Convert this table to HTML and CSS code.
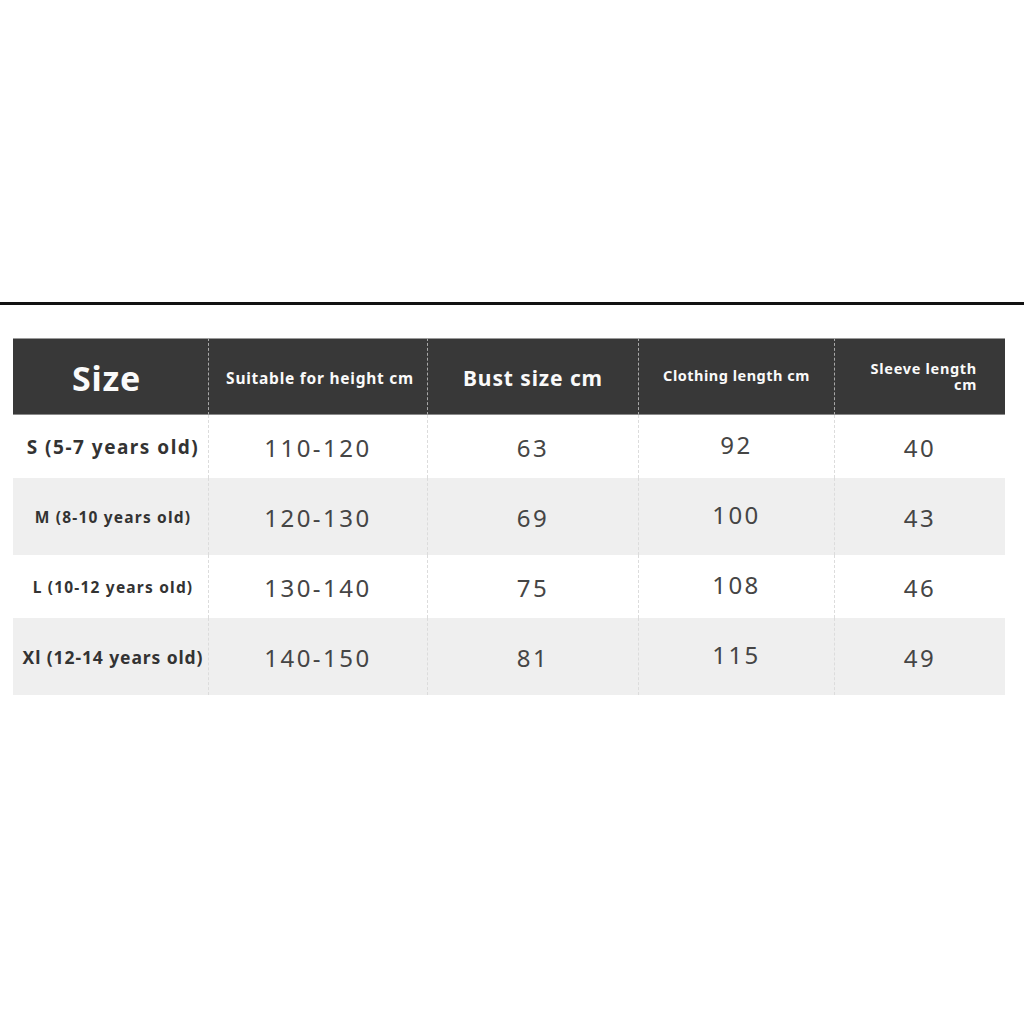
FILE: index.html
```html
<!DOCTYPE html>
<html>
<head>
<meta charset="utf-8">
<link rel="stylesheet" href="styles.css">
</head>
<body>
<div class="rule"></div>
<div class="chart">
  <div class="hd c1"><span class="h-size">Size</span></div>
  <div class="hd sep"><span class="h-height">Suitable for height cm</span></div>
  <div class="hd sep"><span class="h-bust">Bust size cm</span></div>
  <div class="hd sep"><span class="h-cloth">Clothing length cm</span></div>
  <div class="hd sep sleeve"><div class="h-sleeve"><span class="sl-line">Sleeve length</span><span class="sl-line">cm</span></div></div>

  <div class="cell c1 r-a"><span class="sz sz-lg">S (5-7 years old)</span></div>
  <div class="cell sep r-a num">110-120</div>
  <div class="cell sep r-a num">63</div>
  <div class="cell sep r-a num up">92</div>
  <div class="cell sep r-a num">40</div>

  <div class="cell c1 r-b alt"><span class="sz sz-sm">M (8-10 years old)</span></div>
  <div class="cell sep r-b alt num">120-130</div>
  <div class="cell sep r-b alt num">69</div>
  <div class="cell sep r-b alt num up">100</div>
  <div class="cell sep r-b alt num">43</div>

  <div class="cell c1 r-a"><span class="sz sz-sm">L (10-12 years old)</span></div>
  <div class="cell sep r-a num">130-140</div>
  <div class="cell sep r-a num">75</div>
  <div class="cell sep r-a num up">108</div>
  <div class="cell sep r-a num">46</div>

  <div class="cell c1 r-b alt"><span class="sz sz-md">Xl (12-14 years old)</span></div>
  <div class="cell sep r-b alt num">140-150</div>
  <div class="cell sep r-b alt num">81</div>
  <div class="cell sep r-b alt num up">115</div>
  <div class="cell sep r-b alt num">49</div>
</div>
</body>
</html>
```
FILE: styles.css
```css
html, body {
  margin: 0;
  padding: 0;
  background: #ffffff;
}
body {
  font-family: "Noto Sans", "Open Sans", sans-serif;
  width: 1024px;
  height: 1024px;
  overflow: hidden;
}
.rule {
  margin-top: 302px;
  height: 3px;
  background: #111;
}
.chart {
  margin: 33px 0 0 13px;
  width: 992px;
  display: grid;
  grid-template-columns: 195px 219px 211px 196px 171px;
  grid-template-rows: 77px 63px 77px 63px 77px;
}
.hd {
  background: #383838;
  color: #fafafa;
  font-weight: 700;
  display: flex;
  align-items: center;
  justify-content: center;
  border-top: 1px solid #9a9a9a;
  border-bottom: 1px solid #8a8a8a;
  box-sizing: border-box;
}
.hd.sep {
  border-left: 1px dashed #a8a8a8;
}
.cell.sep {
  border-left: 1px dashed #dcdcdc;
}
.hd.c1 {
  padding-right: 8px;
}
.h-size { font-size: 34px; letter-spacing: 0.8px; padding-top: 2px; }
.h-height { font-size: 15.5px; letter-spacing: 0.75px; padding-top: 2px; padding-left: 4px; }
.h-bust { font-size: 21px; letter-spacing: 0.9px; padding-top: 3px; }
.h-cloth { font-size: 14.5px; letter-spacing: 0.5px; padding-bottom: 4px; }
.sleeve {
  justify-content: flex-end;
  padding-right: 28px;
}
.h-sleeve {
  display: flex;
  flex-direction: column;
  align-items: flex-end;
  gap: 0;
  font-size: 14.5px;
  letter-spacing: 0.7px;
  line-height: 16px;
  padding-bottom: 1px;
}
.sl-line {
  display: block;
  height: 16px;
  white-space: nowrap;
}
.cell {
  display: flex;
  align-items: center;
  justify-content: center;
  box-sizing: border-box;
  background: #ffffff;
}
.cell.alt {
  background: #efefef;
}
.cell.c1 {
  padding-left: 5px;
}
.sz {
  font-weight: 700;
  color: #333;
  white-space: nowrap;
}
.sz-lg { font-size: 19px; letter-spacing: 1.5px; }
.sz-md { font-size: 17.5px; letter-spacing: 0.9px; }
.sz-sm { font-size: 15.5px; letter-spacing: 1.2px; }
.num {
  font-size: 24px;
  color: #454545;
  letter-spacing: 2.5px;
  padding-top: 1px;
}
.num.up {
  padding-top: 0;
  padding-bottom: 4px;
}
```
